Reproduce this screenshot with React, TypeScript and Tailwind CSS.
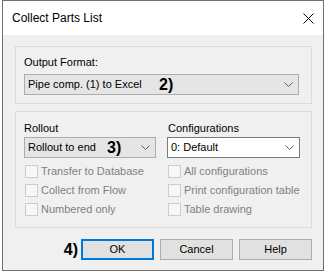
import React from "react";

const font = { fontFamily: '"Liberation Sans", Arial, sans-serif' };

function Chevron() {
  return (
    <svg width="9" height="5" viewBox="0 0 9 5" className="shrink-0">
      <polyline points="0.5,0.5 4.5,4.5 8.5,0.5" fill="none" stroke="#5f5f5f" strokeWidth="1" />
    </svg>
  );
}

function Combo({ text, mark, markLeft, white }: { text: string; mark?: string; markLeft?: string; white?: boolean }) {
  return (
    <div
      className={`relative flex items-center justify-between h-[21px] pl-[3px] pr-[5px] border text-[11px] text-black ${
        white ? "bg-white border-[#7a7a7a]" : "bg-[#e5e5e5] border-[#adadad]"
      }`}
    >
      <span>{text}</span>
      {mark && (
        <span className={`absolute top-[1px] ${markLeft} text-[16px] font-bold leading-[18px]`}>{mark}</span>
      )}
      <Chevron />
    </div>
  );
}

function Check({ label }: { label: string }) {
  return (
    <div className="flex items-center gap-[3px] h-[13px] ml-[1px]">
      <div className="w-[13px] h-[13px] border border-[#cccccc] bg-[#f7f7f7] shrink-0" />
      <span className="text-[11px] text-[#808080] leading-[13px] whitespace-nowrap">{label}</span>
    </div>
  );
}

export default function App() {
  return (
    <div className="w-[326px] h-[275px] bg-white" style={font}>
      <div className="ml-[2px] w-[322px] h-[271px] border border-[#6f6f6f] flex flex-col">
        {/* Title bar */}
        <div className="h-[34px] bg-white flex items-center justify-between pl-[9px] pr-[9px] shrink-0">
          <span className="text-[12px] text-black">Collect Parts List</span>
          <svg width="11" height="11" viewBox="0 0 11 11">
            <path d="M0.5 0.5 L10.5 10.5 M10.5 0.5 L0.5 10.5" stroke="#000" strokeWidth="1" />
          </svg>
        </div>

        {/* Body */}
        <div className="flex-1 bg-[#f0f0f0] pl-[12px] pr-[11px] pt-[11px]">
          {/* Output format */}
          <div className="h-[58px] border border-[#dcdcdc] pl-[8px] pr-[12px] pt-[9px]">
            <div className="text-[11px] leading-[13px] h-[13px] text-black">Output Format:</div>
            <div className="mt-[5px]">
              <Combo text="Pipe comp. (1) to Excel" mark="2)" markLeft="left-[134px]" />
            </div>
          </div>

          {/* Options */}
          <div className="mt-[7px] h-[117px] border border-[#dcdcdc] pl-[8px] pr-[11px] pt-[10px] flex gap-[11px]">
            <div className="w-[132px] flex flex-col">
              <div className="text-[11px] leading-[13px] h-[13px] text-black">Rollout</div>
              <div className="mt-[2px]">
                <Combo text="Rollout to end" mark="3)" markLeft="left-[82px]" />
              </div>
              <div className="mt-[7px] flex flex-col gap-[6px]">
                <Check label="Transfer to Database" />
                <Check label="Collect from Flow" />
                <Check label="Numbered only" />
              </div>
            </div>
            <div className="flex-1 flex flex-col">
              <div className="text-[11px] leading-[13px] h-[13px] text-black ml-[1px]">Configurations</div>
              <div className="mt-[2px]">
                <Combo text="0: Default" white />
              </div>
              <div className="mt-[7px] flex flex-col gap-[6px]">
                <Check label="All configurations" />
                <Check label="Print configuration table" />
                <Check label="Table drawing" />
              </div>
            </div>
          </div>

          {/* Buttons */}
          <div className="mt-[11px] flex items-center justify-end gap-[6px]">
            <span className="text-[16px] font-bold leading-[18px] mr-[-3px]">4)</span>
            <button className="w-[73px] h-[21px] border-2 border-[#0078d7] bg-[#e1e1e1] text-[11px] text-black">OK</button>
            <button className="w-[73px] h-[21px] border border-[#adadad] bg-[#e1e1e1] text-[11px] text-black">Cancel</button>
            <button className="w-[73px] h-[21px] border border-[#adadad] bg-[#e1e1e1] text-[11px] text-black">Help</button>
          </div>
        </div>
      </div>
    </div>
  );
}
